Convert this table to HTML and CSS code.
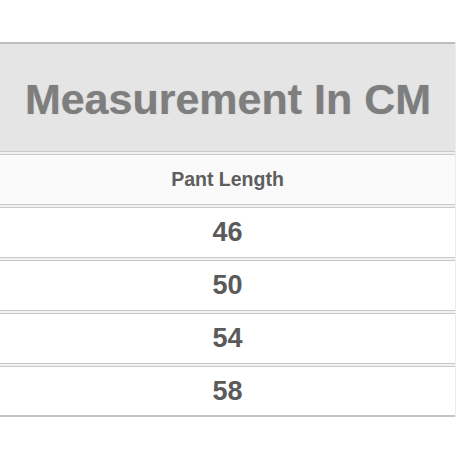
FILE: index.html
```html
<!DOCTYPE html>
<html>
<head>
<meta charset="utf-8">
<link rel="stylesheet" href="styles.css">
</head>
<body>
<div class="sheet">
  <div class="row title-row"><span class="title">Measurement In CM</span></div>
  <div class="row label-row"><span class="label">Pant Length</span></div>
  <div class="row value-row"><span class="value">46</span></div>
  <div class="row value-row"><span class="value">50</span></div>
  <div class="row value-row"><span class="value">54</span></div>
  <div class="row value-row"><span class="value">58</span></div>
</div>
</body>
</html>
```
FILE: styles.css
```css
html, body {
  margin: 0;
  padding: 0;
  background: #ffffff;
}
body {
  font-family: "Liberation Sans", Arial, sans-serif;
  padding-top: 42px;
}
.sheet {
  width: 455px;
  border-right: 1px solid #ececec;
  display: flex;
  flex-direction: column;
  gap: 2px;
  background: #f1f1f1;
}
.row {
  display: flex;
  align-items: center;
  justify-content: center;
  border-top: 1px solid #c9c9c9;
  border-bottom: 1px solid #c9c9c9;
  box-sizing: border-box;
}
.title-row {
  height: 110px;
  background: #e5e5e5;
  border-top: 2px solid #bdbdbd;
  padding-top: 3px;
}
.title {
  font-size: 43px;
  font-weight: bold;
  color: #7e7e7e;
  text-shadow: 0 0 1px rgba(120,120,120,0.5);
  padding-left: 1px;
}
.label-row {
  height: 51px;
  background: #fafafa;
}
.label {
  font-size: 19.5px;
  font-weight: bold;
  color: #5e5e5e;
}
.value-row {
  height: 51px;
  background: #ffffff;
}
.value-row:last-child {
  border-bottom: 2px solid #c4c4c4;
}
.value {
  font-size: 27px;
  font-weight: bold;
  color: #5a5a5a;
}
```
